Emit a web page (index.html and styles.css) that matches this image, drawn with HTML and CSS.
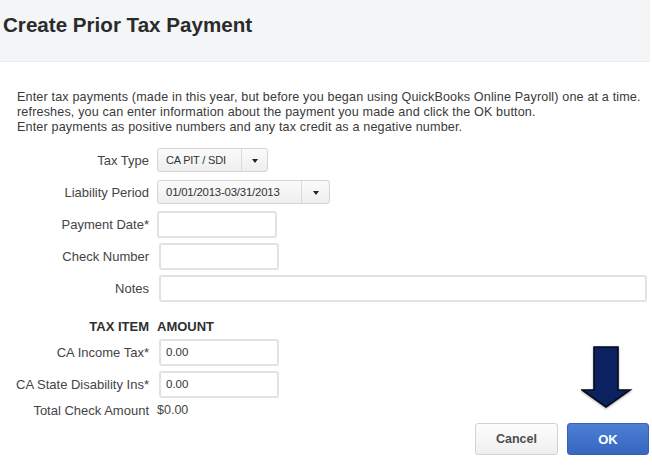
FILE: index.html
```html
<!DOCTYPE html>
<html>
<head>
<meta charset="utf-8">
<link rel="stylesheet" href="styles.css">
</head>
<body>
<div class="page">
  <header class="header">
    <h1 class="title">Create Prior Tax Payment</h1>
  </header>
  <div class="intro">
    <p>Enter tax payments (made in this year, but before you began using QuickBooks Online Payroll) one at a time.</p>
    <p>refreshes, you can enter information about the payment you made and click the OK button.</p>
    <p>Enter payments as positive numbers and any tax credit as a negative number.</p>
  </div>
  <div class="form">
    <div class="row">
      <label class="label">Tax Type</label>
      <div class="select select-type"><span class="select-value">CA PIT / SDI</span><span class="select-btn"><span class="caret"></span></span></div>
    </div>
    <div class="row">
      <label class="label">Liability Period</label>
      <div class="select select-period"><span class="select-value">01/01/2013-03/31/2013</span><span class="select-btn"><span class="caret"></span></span></div>
    </div>
    <div class="row">
      <label class="label">Payment Date*</label>
      <div class="input"></div>
    </div>
    <div class="row">
      <label class="label">Check Number</label>
      <div class="input input-shift"></div>
    </div>
    <div class="row">
      <label class="label">Notes</label>
      <div class="input input-shift input-wide"></div>
    </div>
    <div class="row-head">
      <span class="label head">TAX ITEM</span>
      <span class="head">AMOUNT</span>
    </div>
    <div class="row">
      <label class="label">CA Income Tax*</label>
      <div class="input input-shift"><span class="value">0.00</span></div>
    </div>
    <div class="row">
      <label class="label">CA State Disability Ins*</label>
      <div class="input input-shift"><span class="value">0.00</span></div>
    </div>
    <div class="row-total">
      <span class="label">Total Check Amount</span>
      <span class="total">$0.00</span>
    </div>
  </div>
  <div class="footer">
    <button class="btn btn-cancel">Cancel</button>
    <button class="btn btn-ok">OK</button>
  </div>
  <svg class="arrow" width="52" height="66" viewBox="0 0 52 66">
    <path d="M13 2 H37 V45 H49 L25 62 L1 45 H13 Z" fill="#0c2160" stroke="#050a18" stroke-width="1.6" stroke-linejoin="miter"/>
  </svg>
</div>
</body>
</html>
```
FILE: styles.css
```css
html, body {
  margin: 0;
  padding: 0;
  background: #ffffff;
}
body {
  font-family: "Liberation Sans", Arial, Helvetica, sans-serif;
  color: #333333;
  overflow: hidden;
}
.page {
  position: relative;
  width: 652px;
  height: 472px;
  overflow: hidden;
}
.header {
  height: 61px;
  margin-right: 2px;
  background: #f4f5f7;
  border-bottom: 1px solid #eceef0;
  display: flex;
  align-items: flex-start;
}
.title {
  margin: 14px 0 0 3px;
  font-size: 20.6px;
  font-weight: bold;
  color: #2b2b2b;
  line-height: 22px;
}
.intro {
  margin-top: 28px;
  padding-left: 17px;
  font-size: 12.6px;
  letter-spacing: 0.15px;
  line-height: 15px;
  color: #3a3a3a;
  white-space: nowrap;
}
.intro p {
  margin: 0;
}
.form {
  margin-top: 9px;
}
.row {
  display: flex;
  align-items: center;
  height: 32px;
}
.label {
  width: 149px;
  flex: none;
  text-align: right;
  font-size: 13px;
  color: #444444;
  margin-right: 8px;
}
.select {
  display: flex;
  align-items: stretch;
  height: 22px;
  border: 1px solid #d4d4d4;
  border-radius: 3px;
  background: linear-gradient(#fbfbfb, #eeeeee);
  box-sizing: content-box;
}
.select-type {
  width: 109px;
}
.select-period {
  width: 171px;
}
.select-value {
  flex: 1;
  display: flex;
  align-items: center;
  padding-left: 8px;
  font-size: 11px;
  color: #333333;
  letter-spacing: -0.2px;
}
.select-period .select-value {
  font-size: 11.4px;
}
.select-btn {
  width: 25px;
  border-left: 1px solid #dadada;
  display: flex;
  align-items: center;
  justify-content: center;
}
.select-period .select-btn {
  width: 27px;
}
.caret {
  width: 0;
  height: 0;
  border-left: 3.5px solid transparent;
  border-right: 3.5px solid transparent;
  border-top: 4px solid #222222;
  margin-top: 2px;
}
.input {
  width: 116px;
  height: 23px;
  border: 2px solid #e2e2e2;
  border-radius: 3px;
  background: #ffffff;
  display: flex;
  align-items: center;
}
.input-shift {
  margin-left: 2px;
}
.input-wide {
  width: 484px;
}
.value {
  padding-left: 5px;
  font-size: 11.5px;
  color: #333333;
}
.row-head {
  display: flex;
  align-items: center;
  height: 16px;
  margin-top: 14px;
  margin-bottom: 2px;
}
.head {
  font-size: 13px;
  font-weight: bold;
  color: #2f2f2f;
}
.row-head .label {
  color: #2f2f2f;
}
.row-total {
  display: flex;
  align-items: center;
  height: 20px;
}
.total {
  font-size: 12.5px;
  color: #444444;
}
.footer {
  display: flex;
  justify-content: flex-end;
  gap: 9px;
  margin-top: 3px;
  padding-right: 3px;
}
.btn {
  height: 32px;
  border-radius: 3px;
  font-family: "Liberation Sans", Arial, Helvetica, sans-serif;
  font-size: 12.5px;
  font-weight: bold;
  padding: 0;
}
.btn-cancel {
  width: 83px;
  background: linear-gradient(#fdfdfd, #efefef);
  border: 1px solid #d2d2d2;
  color: #4d4d4d;
}
.btn-ok {
  width: 82px;
  background: linear-gradient(#4c7fd6, #3766bf);
  border: 1px solid #3560b3;
  color: #ffffff;
  font-size: 13px;
}
.arrow {
  position: absolute;
  left: 581px;
  top: 345px;
  filter: drop-shadow(0 1px 1px rgba(0, 0, 0, 0.35));
}
```
